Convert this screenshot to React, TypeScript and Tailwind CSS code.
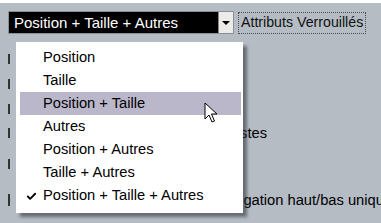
import { Check } from "lucide-react";

const ITEMS = [
  "Position",
  "Taille",
  "Position + Taille",
  "Autres",
  "Position + Autres",
  "Taille + Autres",
  "Position + Taille + Autres",
];

const font = { fontFamily: '"Liberation Sans", Arial, sans-serif' };

function Cursor() {
  return (
    <svg width="14" height="22" viewBox="0 0 14 22" className="absolute left-[204px] top-[99px]">
      <path
        d="M1 1 L1 17 L5 13 L8 20 L10.5 19 L7.5 12 L13 12 Z"
        fill="#fff"
        stroke="#000"
        strokeWidth="1"
        strokeLinejoin="miter"
      />
    </svg>
  );
}

export default function App() {
  return (
    <div
      className="relative w-[381px] h-[223px] overflow-hidden bg-[#b5bcc4] border-t-[3px] border-white text-[14.7px] text-black"
      style={font}
    >
      <div className="flex h-full">
        {/* left light strip */}
        <div className="w-[5px] h-full bg-[#c9ced5]" />

        <div className="flex-1 pl-[8px] pt-[8px]">
          {/* top row: combo + label */}
          <div className="flex items-center">
            <div className="flex h-[23px] w-[226px] border border-[#8a9098]">
              <div className="flex-1 bg-black text-white flex items-center pl-[5px] leading-none whitespace-nowrap text-[15px]">
                Position + Taille + Autres
              </div>
              <div className="w-[15px] bg-[#ecebe8] border-l border-[#888] flex items-center justify-center">
                <div className="w-0 h-0 border-l-[4px] border-r-[4px] border-t-[4px] border-l-transparent border-r-transparent border-t-black" />
              </div>
            </div>
            <div className="ml-[4px] h-[22px] flex items-center px-[2px] border border-dotted border-[#4a4a4a] whitespace-nowrap text-[#111] text-[14.2px]">
              Attributs Verrouillés
            </div>
          </div>

          {/* rows behind the menu */}
          <div className="mt-[13px] flex flex-col">
            <Row h="h-[24px]" />
            <Row h="h-[25px]" />
            <Row h="h-[26px]" />
            <div className="h-[22px] flex items-center">
              <div className="w-[13px] h-[10px] border-l-2 border-[#333]" />
              <div className="w-[246px] text-right whitespace-nowrap overflow-hidden">Utiliser les couleurs des listes</div>
            </div>
            <Row h="h-[40px]" />
            <div className="h-[32px] flex items-center">
              <div className="w-[13px] h-[12px] border-l-2 border-[#333]" />
              <div className="ml-[193px] whitespace-nowrap">Navigation haut/bas unique</div>
            </div>
          </div>
        </div>
      </div>

      {/* open dropdown menu */}
      <div className="absolute left-[16px] top-[39px] w-[227px] h-[171px] bg-white pt-[4px] pb-[6px] pl-[4px] pr-[2px] shadow-[4px_4px_3px_rgba(40,44,52,0.55)]">
        {ITEMS.map((label, i) => (
          <div
            key={label}
            className={`relative h-[23px] flex items-center pl-[23px] whitespace-nowrap ${i === 2 ? "bg-[#bbb7ca]" : ""}`}
          >
            {i === 6 && (
              <Check className="absolute left-[6px] top-[7px] w-[11px] h-[11px]" strokeWidth={4} />
            )}
            {label}
          </div>
        ))}
      </div>

      <Cursor />
    </div>
  );
}

function Row({ h }: { h: string }) {
  return (
    <div className={`${h} flex items-center`}>
      <div className="w-[13px] h-[10px] border-l-2 border-[#333]" />
    </div>
  );
}
